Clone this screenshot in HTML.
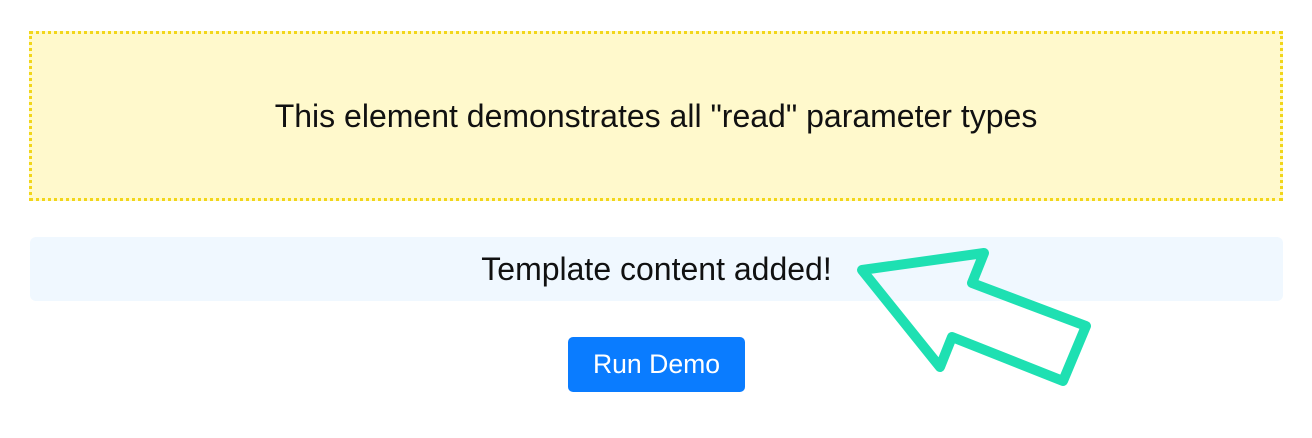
<!DOCTYPE html>
<html><head><style>
body{margin:0;width:1312px;height:438px;background:#fff;font-family:"Liberation Sans",Arial,sans-serif;position:relative;overflow:hidden}
.y{position:absolute;left:29px;top:31px;width:1248px;height:164px;border:3px dotted #f2d61a;background:#fff9cc;display:flex;align-items:center;justify-content:center;font-size:32px;color:#111}
.b{position:absolute;left:30px;top:237px;width:1253px;height:64px;background:#f0f8ff;border-radius:6px;display:flex;align-items:center;justify-content:center;font-size:32px;color:#111}
.btn{position:absolute;left:568px;top:337px;width:177px;height:55px;background:#0a7cff;border-radius:5px;color:#fff;font-size:26.6px;display:flex;align-items:center;justify-content:center}
svg{position:absolute;left:0;top:0}
</style></head><body>
<div class="y">This element demonstrates all "read" parameter types</div>
<div class="b">Template content added!</div>
<div class="btn">Run Demo</div>
<svg width="1312" height="438"><polygon points="862,270 984,253 972,283 1086,326 1063,381 952,337 940,367" fill="none" stroke="#1ee0b2" stroke-width="10" stroke-linejoin="round"/></svg>
</body></html>
